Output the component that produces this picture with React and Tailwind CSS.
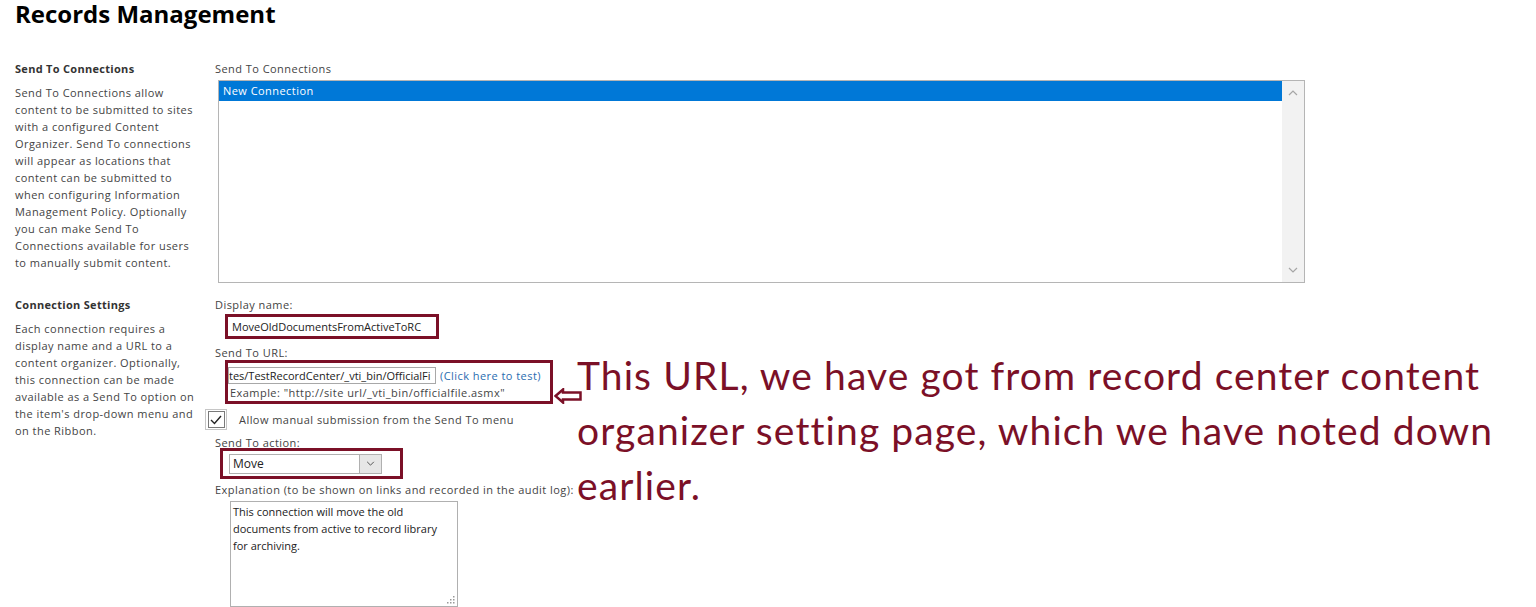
import React from 'react';

const RED = '#7b1027';

const Chevron = ({ dir = 'down', className = '' }) => (
  <svg viewBox="0 0 10 6" className={className} fill="none" stroke="currentColor" strokeWidth="1.2">
    {dir === 'down' ? <path d="M1 1 L5 5 L9 1" /> : <path d="M1 5 L5 1 L9 5" />}
  </svg>
);

const App = () => {
  return (
    <div className="relative w-[1536px] h-[607px] bg-white overflow-hidden font-['Open_Sans',sans-serif] text-[11px] leading-[17px] tracking-[0.45px] text-[#444]">
      <h1 className="pl-[15px] text-[24px] leading-[34px] font-bold tracking-normal text-black mt-[-3px]">Records Management</h1>

      <div className="flex mt-[29px]">
        {/* Left descriptions */}
        <div className="w-[215px] pl-[15px] shrink-0">
          <div className="font-bold text-[#333] tracking-[0.3px]">Send To Connections</div>
          <p className="mt-[7px] w-[180px]">
            Send To Connections allow content to be submitted to sites with a configured Content Organizer. Send To
            connections will appear as locations that content can be submitted to when configuring Information
            Management Policy. Optionally you can make Send To Connections available for users to manually submit
            content.
          </p>
          <div className="mt-[25px] font-bold text-[#333] tracking-[0.3px]">Connection Settings</div>
          <p className="mt-[7px] w-[180px]">
            Each connection requires a display name and a URL to a content organizer. Optionally, this connection can
            be made available as a Send To option on the item's drop-down menu and on the Ribbon.
          </p>
        </div>

        {/* Right form */}
        <div className="relative flex-1 flex flex-col items-start">
          <div>Send To Connections</div>
          <div className="ml-[3px] mt-[3px] w-[1087px] h-[203px] border border-[#b5b5b5] flex">
            <div className="flex-1">
              <div className="h-[20px] bg-[#0078d7] text-white pl-[4px] leading-[20px]">New Connection</div>
            </div>
            <div className="w-[22px] bg-[#f2f2f2] flex flex-col items-center justify-between py-[9px] text-[#a6a6a6]">
              <Chevron dir="up" className="w-[10px] h-[6px]" />
              <Chevron dir="down" className="w-[10px] h-[6px]" />
            </div>
          </div>

          <div className="mt-[13px]">Display name:</div>
          <div className="ml-[10px] mt-[1px] w-[214px] h-[25px] border-[3px] flex items-center pl-[4px] tracking-normal text-[#222] whitespace-nowrap" style={{ borderColor: RED }}>
            MoveOldDocumentsFromActiveToRC
          </div>

          <div className="mt-[5px]">Send To URL:</div>
          <div className="ml-[10px] mt-[-1px] w-[328px] h-[44px] border-[3px] pt-[4px]" style={{ borderColor: RED }}>
            <div className="flex items-center">
              <div className="w-[208px] h-[17px] border border-[#a8a8a8] leading-[15px] tracking-normal text-[#222] whitespace-nowrap overflow-hidden">
                tes/TestRecordCenter/_vti_bin/OfficialFi
              </div>
              <span className="ml-[4px] text-[#2a6cb0]">(Click here to test)</span>
            </div>
            <div className="pl-[2px]">Example: "http://site url/_vti_bin/officialfile.asmx"</div>
          </div>

          <div className="ml-[-10px] mt-[5px] flex items-center">
            <div className="w-[22px] h-[21px] border border-[#c6c6c6] flex items-center justify-center">
              <div className="w-[17px] h-[17px] border border-[#7a7a7a] bg-white flex items-center justify-center">
                <svg viewBox="0 0 12 10" className="w-[12px] h-[10px]" fill="none" stroke="#222" strokeWidth="1.4">
                  <path d="M1 5 L4.5 8.5 L11 1" />
                </svg>
              </div>
            </div>
            <span className="ml-[12px]">Allow manual submission from the Send To menu</span>
          </div>

          <div className="mt-[4px]">Send To action:</div>
          <div className="ml-[5px] mt-[-3px] w-[183px] h-[31px] border-[3px] flex items-center pl-[6px]" style={{ borderColor: RED }}>
            <div className="w-[153px] h-[20px] border border-[#b0b0b0] flex items-center">
              <span className="flex-1 pl-[3px] text-[12px] tracking-normal text-[#222]">Move</span>
              <div className="w-[22px] h-full border-l border-[#b0b0b0] bg-[#e6e6e6] flex items-center justify-center text-[#555]">
                <Chevron className="w-[9px] h-[5px]" />
              </div>
            </div>
          </div>

          <div className="mt-[2px] whitespace-nowrap">Explanation (to be shown on links and recorded in the audit log):</div>
          <div className="relative ml-[15px] mt-[3px] w-[228px] h-[106px] border border-[#b0b0b0] pl-[2px] pt-[1px] tracking-normal text-[#222]">
            <p className="w-[220px]">
              This connection will move the old documents from active to record library for archiving.
            </p>
            <svg viewBox="0 0 8 8" className="absolute right-[2px] bottom-[2px] w-[8px] h-[8px]" fill="#999">
              <rect x="6" y="0" width="1.5" height="1.5" />
              <rect x="3" y="3" width="1.5" height="1.5" />
              <rect x="6" y="3" width="1.5" height="1.5" />
              <rect x="0" y="6" width="1.5" height="1.5" />
              <rect x="3" y="6" width="1.5" height="1.5" />
              <rect x="6" y="6" width="1.5" height="1.5" />
            </svg>
          </div>

          {/* Annotation arrow */}
          <svg viewBox="0 0 28 16" className="absolute left-[339px] top-[328px] w-[28px] h-[16px]" fill="none" stroke={RED} strokeWidth="2.5" strokeLinejoin="miter">
            <path d="M1.5 8 L9 1.5 L9 4.5 L26.5 4.5 L26.5 11.5 L9 11.5 L9 14.5 Z" />
          </svg>

          {/* Annotation text */}
          <div className="absolute left-[362px] top-[288px] font-['Lato',sans-serif] text-[39px] leading-[55px] tracking-[1.1px] whitespace-nowrap" style={{ color: RED }}>
            This URL, we have got from record center content
            <br />
            organizer setting page, which we have noted down
            <br />
            earlier.
          </div>
        </div>
      </div>
    </div>
  );
};

export default App;
